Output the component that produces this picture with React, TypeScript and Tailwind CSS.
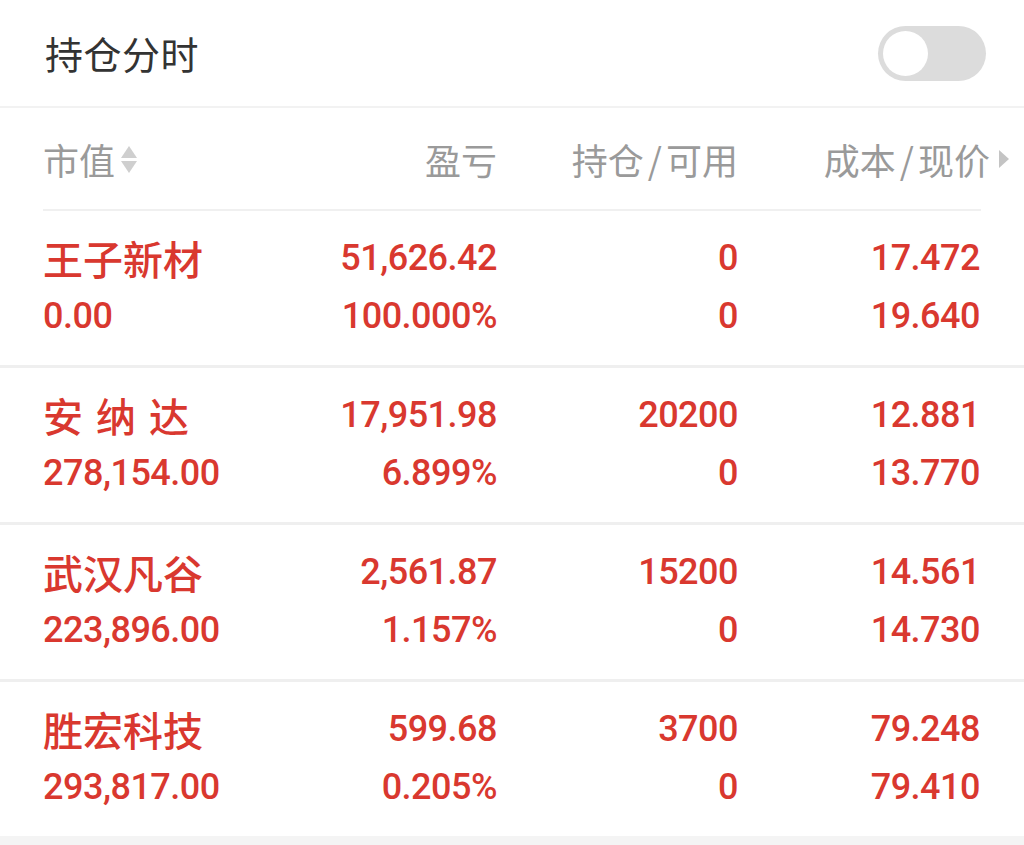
import React from "react";

const rows = [
  { name: "王子新材", value: "0.00", pl: "51,626.42", pct: "100.000%", hold: "0", avail: "0", cost: "17.472", price: "19.640" },
  { name: "安 纳 达", value: "278,154.00", pl: "17,951.98", pct: "6.899%", hold: "20200", avail: "0", cost: "12.881", price: "13.770" },
  { name: "武汉凡谷", value: "223,896.00", pl: "2,561.87", pct: "1.157%", hold: "15200", avail: "0", cost: "14.561", price: "14.730" },
  { name: "胜宏科技", value: "293,817.00", pl: "599.68", pct: "0.205%", hold: "3700", avail: "0", cost: "79.248", price: "79.410" },
];

const cjk = "font-['Noto_Sans_CJK_SC',sans-serif]";
const num = "font-['Roboto','Noto_Sans_CJK_SC',sans-serif] tracking-[-0.5px]";

const SortIcon = () => (
  <svg width="20" height="36" viewBox="0 0 20 36" className="ml-[4px]">
    <path d="M10 5 L18 17 L2 17 Z" fill="#cfcfcf" />
    <path d="M2 20 L18 20 L10 32 Z" fill="#cfcfcf" />
  </svg>
);

const MoreIcon = () => (
  <svg width="12" height="20" viewBox="0 0 12 20" className="ml-[8px]">
    <path d="M1 1 L11 10 L1 19 Z" fill="#c4c4c4" />
  </svg>
);

const Slash = () => <span className="mx-[4px]">/</span>;

export default function App() {
  return (
    <div className={`w-[1024px] h-[845px] bg-white flex flex-col overflow-hidden ${cjk}`}>
      {/* top bar */}
      <div className="h-[108px] flex items-center justify-between pl-[45px] pr-[38px] border-b-2 border-[#f2f2f2]">
        <span className="text-[38px] leading-none text-[#333333] tracking-[0.5px]">持仓分时</span>
        <div className="w-[108px] h-[55px] rounded-full bg-[#dcdcdc] flex items-center px-[5px]">
          <div className="w-[45px] h-[45px] rounded-full bg-white" />
        </div>
      </div>

      {/* column headings */}
      <div className="mx-[43px] h-[103px] border-b-2 border-[#f0f0f0] grid grid-cols-[220px_234px_241px_242px] items-center text-[36px] text-[#9a9a9a] leading-none">
        <div className="flex items-center">
          <span>市值</span>
          <SortIcon />
        </div>
        <div className="text-right">盈亏</div>
        <div className="text-right">
          持仓<Slash />可用
        </div>
        <div className="flex items-center justify-end -mr-[30px]">
          <span>
            成本<Slash />现价
          </span>
          <MoreIcon />
        </div>
      </div>

      {/* holdings */}
      {rows.map((r, i) => (
        <div key={i} className={i < rows.length - 1 ? "border-b-[3px] border-[#efefef]" : ""}>
          <div className="h-[154px] pl-[43px] pt-[18px] grid grid-cols-[220px_234px_241px_242px] text-[#d9382f] font-medium">
            <div className="flex flex-col">
              <span className={`${cjk} text-[40px] leading-[58px] whitespace-pre [word-spacing:4px]`}>{r.name}</span>
              <span className={`${num} text-[36px] leading-[58px]`}>{r.value}</span>
            </div>
            <div className={`${num} flex flex-col items-end text-[36px] leading-[58px]`}>
              <span>{r.pl}</span>
              <span>{r.pct}</span>
            </div>
            <div className={`${num} flex flex-col items-end text-[36px] leading-[58px]`}>
              <span>{r.hold}</span>
              <span>{r.avail}</span>
            </div>
            <div className={`${num} flex flex-col items-end text-[36px] leading-[58px]`}>
              <span>{r.cost}</span>
              <span>{r.price}</span>
            </div>
          </div>
        </div>
      ))}
      <div className="flex-1 bg-[#f4f4f4]" />
    </div>
  );
}
